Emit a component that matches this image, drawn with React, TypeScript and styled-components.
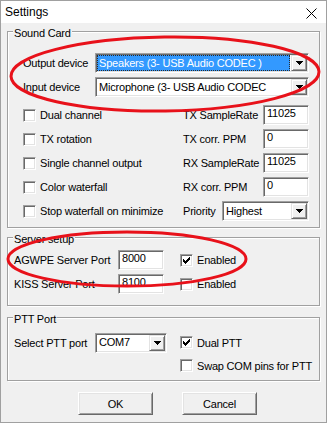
import styled, { createGlobalStyle } from 'styled-components'

const GlobalStyle = createGlobalStyle`
  html, body {
    margin: 0;
    padding: 0;
    background: #f0f0f0;
  }
  body {
    font-family: 'Liberation Sans', Arial, sans-serif;
  }
`

const Window = styled.div`
  position: relative;
  box-sizing: border-box;
  width: 327px;
  height: 423px;
  border: 1px solid #a0a0a0;
  background: #f0f0f0;
  display: flex;
  flex-direction: column;
  font-size: 11px;
  letter-spacing: -0.2px;
  color: #000;
  overflow: hidden;
`

const TitleBar = styled.div`
  height: 22px;
  flex: none;
  background: #fff;
  display: flex;
  align-items: center;
  padding: 0 9px 0 4px;
`

const Title = styled.span`
  font-size: 12px;
  letter-spacing: 0;
`

const CloseIcon = styled.svg`
  margin: 2px 0 0 auto;
`

const Body = styled.div`
  display: flex;
  flex-direction: column;
  padding: 8px 6px 0;
`

const GroupBox = styled.div<{ $height: number; $gap?: number }>`
  box-sizing: border-box;
  width: 313px;
  height: ${({ $height }) => $height}px;
  margin-top: ${({ $gap }) => $gap ?? 0}px;
  border: 1px solid #a0a0a0;
  box-shadow: inset 1px 1px 0 #fff, 1px 1px 0 #fff;
  display: flex;
  flex-direction: column;
`

const Caption = styled.span`
  align-self: flex-start;
  margin: -5px 0 0 5px;
  padding: 0 1px;
  line-height: 13px;
  background: #f0f0f0;
`

const GroupContent = styled.div<{ $pad: string }>`
  display: flex;
  flex-direction: column;
  padding: ${({ $pad }) => $pad};
`

const Row = styled.div<{ $height?: number }>`
  display: flex;
  align-items: center;
  height: ${({ $height }) => $height ?? 24}px;
`

const RowLabel = styled.span<{ $width: number }>`
  width: ${({ $width }) => $width}px;
  flex: none;
  white-space: nowrap;
`

const FieldLabel = styled.span`
  flex: 1;
  white-space: nowrap;
`

const sunken = `
  box-sizing: border-box;
  background: #fff;
  border: 1px solid;
  border-color: #a0a0a0 #fff #fff #a0a0a0;
  box-shadow: inset 1px 1px 0 #696969, inset -1px -1px 0 #e3e3e3;
`

const Combo = styled.div<{ $width?: number }>`
  ${sunken}
  height: 20px;
  ${({ $width }) => ($width ? `width: ${$width}px; flex: none;` : 'flex: 1;')}
  display: flex;
  padding: 1px;
`

const ComboText = styled.span<{ $selected?: boolean }>`
  flex: 1;
  display: flex;
  align-items: center;
  margin-right: 1px;
  padding-left: 2px;
  line-height: 13px;
  white-space: nowrap;
  overflow: hidden;
  ${({ $selected }) =>
    $selected &&
    `
    background: #3399ff;
    color: #fff;
    outline: 1px dotted #2a2a2a;
    outline-offset: -1px;
  `}
`

const DropButton = styled.span`
  box-sizing: border-box;
  width: 16px;
  flex: none;
  background: #f0f0f0;
  border: 1px solid;
  border-color: #e3e3e3 #696969 #696969 #e3e3e3;
  box-shadow: inset 1px 1px 0 #fff, inset -1px -1px 0 #a0a0a0;
  display: flex;
  align-items: center;
  justify-content: center;
`

const Edit = styled.div<{ $width: number }>`
  ${sunken}
  width: ${({ $width }) => $width}px;
  flex: none;
  height: 20px;
  padding: 1px 3px;
  line-height: 12px;
`

const CheckItem = styled.label<{ $width?: number }>`
  display: flex;
  align-items: center;
  gap: 4px;
  white-space: nowrap;
  ${({ $width }) => ($width ? `width: ${$width}px; flex: none;` : '')}
`

const CheckBox = styled.span`
  ${sunken}
  width: 13px;
  height: 13px;
  flex: none;
  display: flex;
  align-items: center;
  justify-content: center;
`

const PttGrid = styled.div`
  display: grid;
  grid-template-columns: 166px auto;
  grid-auto-rows: 23px;
  align-items: center;
`

const ButtonRow = styled.div`
  display: flex;
  gap: 29px;
  margin-top: 11px;
  padding-left: 71px;
`

const PushButton = styled.button`
  box-sizing: border-box;
  width: 75px;
  height: 23px;
  padding: 0;
  background: #f0f0f0;
  border: 1px solid;
  border-color: #fff #696969 #696969 #fff;
  box-shadow: inset 1px 1px 0 #e3e3e3, inset -1px -1px 0 #a0a0a0;
  font: inherit;
  letter-spacing: inherit;
  color: #000;
`

const Marks = styled.svg`
  position: absolute;
  left: -1px;
  top: -1px;
  pointer-events: none;
`

const Arrow = () => (
  <svg width="7" height="4" viewBox="0 0 7 4">
    <path d="M0 0h7v1H0zM1 1h5v1H1zM2 2h3v1H2zM3 3h1v1H3z" fill="#000" shapeRendering="crispEdges" />
  </svg>
)

const Check = () => (
  <svg width="7" height="7" viewBox="0 0 7 7">
    <path
      d="M0 2h1v3H0zM1 3h1v3H1zM2 4h1v3H2zM3 3h1v3H3zM4 2h1v3H4zM5 1h1v3H5zM6 0h1v3H6z"
      fill="#000"
      shapeRendering="crispEdges"
    />
  </svg>
)

const ComboBox = ({ text, width, selected }: { text: string; width?: number; selected?: boolean }) => (
  <Combo $width={width}>
    <ComboText $selected={selected}>{text}</ComboText>
    <DropButton>
      <Arrow />
    </DropButton>
  </Combo>
)

const CheckOption = ({ label, checked, width }: { label: string; checked?: boolean; width?: number }) => (
  <CheckItem $width={width}>
    <CheckBox>{checked && <Check />}</CheckBox>
    {label}
  </CheckItem>
)

const soundRows = [
  { check: 'Dual channel', label: 'TX SampleRate', value: '11025' },
  { check: 'TX rotation', label: 'TX corr. PPM', value: '0' },
  { check: 'Single channel output', label: 'RX SampleRate', value: '11025' },
  { check: 'Color waterfall', label: 'RX corr. PPM', value: '0' },
]

const App = () => (
  <>
    <GlobalStyle />
    <Window>
      <TitleBar>
        <Title>Settings</Title>
        <CloseIcon width="11" height="11" viewBox="0 0 11 11">
          <path d="M0.5 0.5L10.5 10.5M10.5 0.5L0.5 10.5" stroke="#000" strokeWidth="1" />
        </CloseIcon>
      </TitleBar>
      <Body>
        <GroupBox $height={197}>
          <Caption>Sound Card</Caption>
          <GroupContent $pad="11px 10px 0 15px">
            <Row>
              <RowLabel $width={72}>Output device</RowLabel>
              <ComboBox text="Speakers (3- USB Audio CODEC )" selected />
            </Row>
            <Row>
              <RowLabel $width={72}>Input device</RowLabel>
              <ComboBox text="Microphone (3- USB Audio CODEC" />
            </Row>
            <Row $height={4} />
            {soundRows.map((row) => (
              <Row key={row.check}>
                <CheckOption label={row.check} width={160} />
                <FieldLabel>{row.label}</FieldLabel>
                <Edit $width={46}>{row.value}</Edit>
              </Row>
            ))}
            <Row>
              <CheckOption label="Stop waterfall on minimize" width={160} />
              <FieldLabel>Priority</FieldLabel>
              <ComboBox text="Highest" width={87} />
            </Row>
          </GroupContent>
        </GroupBox>

        <GroupBox $height={69} $gap={9}>
          <Caption>Server setup</Caption>
          <GroupContent $pad="2px 0 0 6px">
            <Row>
              <RowLabel $width={104}>AGWPE Server Port</RowLabel>
              <Edit $width={46}>8000</Edit>
              <RowLabel $width={16} />
              <CheckOption label="Enabled" checked />
            </Row>
            <Row>
              <RowLabel $width={104}>KISS Server Port</RowLabel>
              <Edit $width={46}>8100</Edit>
              <RowLabel $width={16} />
              <CheckOption label="Enabled" />
            </Row>
          </GroupContent>
        </GroupBox>

        <GroupBox $height={64} $gap={11}>
          <Caption>PTT Port</Caption>
          <GroupContent $pad="5px 0 0 6px">
            <PttGrid>
              <Row>
                <RowLabel $width={81}>Select PTT port</RowLabel>
                <ComboBox text="COM7" width={72} />
              </Row>
              <CheckOption label="Dual PTT" checked />
              <span />
              <CheckOption label="Swap COM pins for PTT" />
            </PttGrid>
          </GroupContent>
        </GroupBox>

        <ButtonRow>
          <PushButton>OK</PushButton>
          <PushButton>Cancel</PushButton>
        </ButtonRow>
      </Body>

      <Marks width="327" height="423" viewBox="0 0 327 423">
        <ellipse
          cx="165"
          cy="74"
          rx="154"
          ry="37"
          transform="rotate(-0.8 165 74)"
          fill="none"
          stroke="#e8111a"
          strokeWidth="3"
        />
        <ellipse cx="127" cy="259" rx="119" ry="27" fill="none" stroke="#e8111a" strokeWidth="3" />
      </Marks>
    </Window>
  </>
)

export default App
